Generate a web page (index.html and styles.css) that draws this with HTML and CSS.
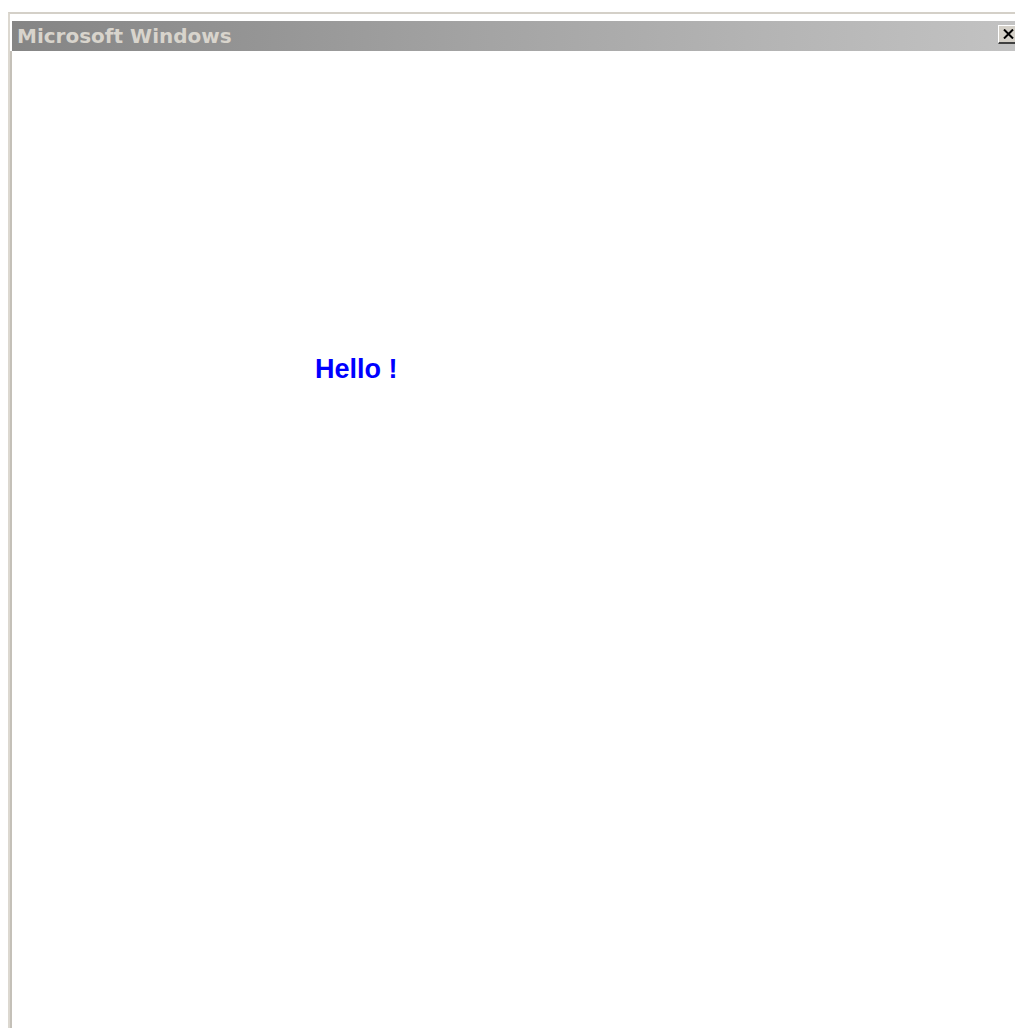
FILE: index.html
```html
<!DOCTYPE html>
<html>
<head>
<meta charset="utf-8">
<title>Microsoft Windows</title>
<link rel="stylesheet" href="styles.css">
</head>
<body>
<div class="window">
  <div class="titlebar">
    <span class="title">Microsoft Windows</span>
    <button class="close" aria-label="Close">
      <svg width="11" height="10" viewBox="0 0 11 10"><path d="M1 0.5 L10 9.5 M10 0.5 L1 9.5" stroke="#000" stroke-width="2" fill="none"/></svg>
    </button>
  </div>
  <div class="client">
    <p class="hello">Hello !</p>
  </div>
</div>
</body>
</html>
```

FILE: styles.css
```css
html, body {
  margin: 0;
  padding: 0;
  background: #ffffff;
  overflow: hidden;
  height: 100%;
}

/* classic window frame */
.window {
  margin: 12px 0 0 8px;
  width: 1030px;
  height: 1030px;
  border-top: 2px solid #d4d0c8;
  border-left: 2px solid #dcd8d0;
  padding: 7px 0 0 0;
  display: flex;
  flex-direction: column;
  box-sizing: border-box;
}

.titlebar {
  height: 30px;
  margin-left: 2px;
  display: flex;
  align-items: flex-start;
  background: linear-gradient(to right, #858585 0%, #a3a3a3 45%, #c4c4c4 100%);
}

.title {
  font-family: "DejaVu Sans", Verdana, sans-serif;
  font-weight: bold;
  font-size: 20px;
  line-height: 30px;
  color: #d8d4cc;
  padding-left: 5px;
  white-space: nowrap;
}

.close {
  margin: 4px 0 0 766px;
  width: 24px;
  height: 19px;
  padding: 0 0 0 4px;
  background: #d4d0c8;
  border-top: 1px solid #ffffff;
  border-left: 1px solid #ffffff;
  border-right: 1px solid #404040;
  border-bottom: 2px solid #404040;
  display: flex;
  align-items: center;
  justify-content: flex-start;
  box-sizing: border-box;
}

.client {
  flex: 1;
  border-left: 2px solid #c4c0b8;
  padding: 303px 0 0 303px;
}

.hello {
  margin: 0;
  font-family: "Liberation Sans", Arial, sans-serif;
  font-weight: bold;
  font-size: 27px;
  line-height: 30px;
  color: #0000ff;
}
```
